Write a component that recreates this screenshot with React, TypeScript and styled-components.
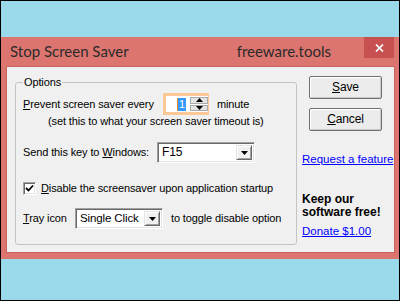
import styled, { createGlobalStyle } from 'styled-components';

const GlobalStyle = createGlobalStyle`
  html, body {
    margin: 0;
    padding: 0;
    background: #000;
  }
  #root {
    width: 400px;
    height: 301px;
  }
`;

const Screen = styled.div`
  width: 400px;
  height: 301px;
  box-sizing: border-box;
  border: 1px solid #000;
  background: #9ad9e9;
  padding-top: 36px;
  font-family: 'Liberation Sans', Arial, sans-serif;
  font-size: 11px;
  line-height: 13px;
  letter-spacing: -0.12px;
  color: #000;
`;

const Window = styled.div`
  height: 222px;
  box-sizing: border-box;
  background: #dc756f;
  padding: 0 5px 7px 6px;
  display: flex;
  flex-direction: column;
`;

const TitleBar = styled.div`
  height: 30px;
  flex-shrink: 0;
  display: flex;
  align-items: flex-start;
  padding-left: 3px;
`;

const TitleText = styled.div`
  font-family: Lato, 'Open Sans', sans-serif;
  font-size: 15px;
  line-height: 20px;
  letter-spacing: 0;
  margin-top: 4px;
  color: #2b2b2b;
  white-space: nowrap;
`;

const Spacer = styled.div`
  flex: 1;
`;

const SiteName = styled(TitleText)`
  margin-right: 33px;
`;

const CloseButton = styled.div`
  width: 30px;
  height: 21px;
  background: #c75050;
  display: flex;
  align-items: center;
  justify-content: center;
`;

const Client = styled.div`
  flex: 1;
  background: #f0f0f0;
  box-shadow: 0 0 0 1px #c9635e;
  display: flex;
  padding: 9px 4px 7px 8px;
`;

const Group = styled.fieldset`
  width: 282px;
  flex-shrink: 0;
  box-sizing: border-box;
  margin: 0;
  padding: 4px 7px 0 7px;
  border: 1px solid #c4c4c4;
  border-radius: 3px;
  min-width: 0;
`;

const Legend = styled.legend`
  padding: 0 1px;
  line-height: 13px;
`;

const Row = styled.div<{ $top: number; $height: number; $indent?: number }>`
  display: flex;
  align-items: center;
  margin-top: ${(p) => p.$top}px;
  height: ${(p) => p.$height}px;
  padding-left: ${(p) => p.$indent ?? 0}px;
  white-space: nowrap;
`;

const Label = styled.span<{ $width?: number }>`
  ${(p) => (p.$width ? `width: ${p.$width}px;` : '')}
  flex-shrink: 0;
`;

const Key = styled.span`
  text-decoration: underline;
`;

const SpinBox = styled.div`
  width: 46px;
  height: 22px;
  box-sizing: border-box;
  border: 3px solid #fdc896;
  border-right-width: 1px;
  background: #fff;
  display: flex;
  margin-right: 8px;
`;

const SpinValue = styled.div`
  flex: 1;
  display: flex;
  align-items: center;
  justify-content: flex-end;
  padding-right: 4px;
`;

const Selected = styled.span`
  background: #3399ff;
  color: #fff;
  border-left: 1px solid #f08a24;
  padding: 0 1px;
  line-height: 13px;
`;

const SpinButtons = styled.div`
  width: 18px;
  display: flex;
  flex-direction: column;
  gap: 1px;
  padding: 1px 0;
`;

const SpinButton = styled.div`
  flex: 1;
  background: #e4e4e4;
  border: 1px solid #a9a9a9;
  display: flex;
  align-items: center;
  justify-content: center;
`;

const Combo = styled.div<{ $width: number; $gap?: number }>`
  width: ${(p) => p.$width}px;
  height: 21px;
  box-sizing: border-box;
  border-top: 1px solid #a0a0a0;
  border-left: 1px solid #a0a0a0;
  border-bottom: 1px solid #fff;
  border-right: 1px solid #fff;
  box-shadow: inset 1px 1px #696969, inset -1px -1px #e3e3e3;
  background: #fff;
  display: flex;
  align-items: stretch;
  padding: 2px;
  margin-right: ${(p) => p.$gap ?? 0}px;
  flex-shrink: 0;
`;

const ComboText = styled.div<{ $size?: number }>`
  flex: 1;
  display: flex;
  align-items: center;
  padding-left: 2px;
  font-size: ${(p) => p.$size ?? 12}px;
`;

const DropButton = styled.div`
  width: 16px;
  box-sizing: border-box;
  background: #f0f0f0;
  border-top: 1px solid #e3e3e3;
  border-left: 1px solid #e3e3e3;
  border-bottom: 1px solid #696969;
  border-right: 1px solid #696969;
  box-shadow: inset 1px 1px #fff, inset -1px -1px #a0a0a0;
  display: flex;
  align-items: center;
  justify-content: center;
`;

const CheckBox = styled.div`
  width: 13px;
  height: 13px;
  box-sizing: border-box;
  border-top: 1px solid #a0a0a0;
  border-left: 1px solid #a0a0a0;
  border-bottom: 1px solid #fff;
  border-right: 1px solid #fff;
  box-shadow: inset 1px 1px #696969, inset -1px -1px #e3e3e3;
  background: #fff;
  display: flex;
  align-items: center;
  justify-content: center;
  margin-right: 5px;
`;

const Side = styled.div`
  flex: 1;
  min-width: 0;
  margin-left: 5px;
  display: flex;
  flex-direction: column;
  align-items: flex-start;
  white-space: nowrap;
`;

const Button = styled.div<{ $top?: number }>`
  width: 73px;
  height: 23px;
  box-sizing: border-box;
  margin-left: 7px;
  margin-top: ${(p) => p.$top ?? 0}px;
  border: 1px solid #707070;
  border-radius: 2px;
  background: #ececec;
  box-shadow: inset 1px 1px #fff, inset -1px -1px #c8c8c8;
  display: flex;
  align-items: center;
  justify-content: center;
  font-size: 12px;
`;

const Link = styled.a<{ $top: number }>`
  color: #0000ff;
  text-decoration: underline;
  margin-top: ${(p) => p.$top}px;
  font-size: 11.5px;
  line-height: 13px;
  letter-spacing: 0;
`;

const Promo = styled.div`
  margin-top: 27px;
  font-weight: bold;
  font-size: 12px;
  line-height: 13px;
  letter-spacing: 0;
`;

const Arrow = ({ up }: { up?: boolean }) => (
  <svg width="7" height="4" viewBox="0 0 7 4">
    <path d={up ? 'M3.5 0 L7 4 L0 4 Z' : 'M0 0 L7 0 L3.5 4 Z'} fill="#000" />
  </svg>
);

function App() {
  return (
    <>
      <GlobalStyle />
      <Screen>
        <Window>
          <TitleBar>
            <TitleText>Stop Screen Saver</TitleText>
            <Spacer />
            <SiteName>freeware.tools</SiteName>
            <CloseButton>
              <svg width="9" height="8" viewBox="0 0 9 8">
                <path d="M1 0.5 L8 7.5 M8 0.5 L1 7.5" stroke="#fff" strokeWidth="1.7" />
              </svg>
            </CloseButton>
          </TitleBar>
          <Client>
            <Group>
              <Legend>Options</Legend>
              <Row $top={0} $height={22}>
                <Label $width={140}>
                  <Key>P</Key>revent screen saver every
                </Label>
                <SpinBox>
                  <SpinValue>
                    <Selected>1</Selected>
                  </SpinValue>
                  <SpinButtons>
                    <SpinButton>
                      <Arrow up />
                    </SpinButton>
                    <SpinButton>
                      <Arrow />
                    </SpinButton>
                  </SpinButtons>
                </SpinBox>
                <Label>minute</Label>
              </Row>
              <Row $top={0} $height={13} $indent={25}>
                (set this to what your screen saver timeout is)
              </Row>
              <Row $top={14} $height={21}>
                <Label $width={134}>
                  Send this key to <Key>W</Key>indows:
                </Label>
                <Combo $width={98}>
                  <ComboText>F15</ComboText>
                  <DropButton>
                    <Arrow />
                  </DropButton>
                </Combo>
              </Row>
              <Row $top={19} $height={13}>
                <CheckBox>
                  <svg width="9" height="9" viewBox="0 0 9 9">
                    <path d="M1 4 L3.5 6.5 L8 1.5" stroke="#000" strokeWidth="1.8" fill="none" />
                  </svg>
                </CheckBox>
                <Label>
                  <Key>D</Key>isable the screensaver upon application startup
                </Label>
              </Row>
              <Row $top={13} $height={21}>
                <Label $width={52}>
                  <Key>T</Key>ray icon
                </Label>
                <Combo $width={88} $gap={8}>
                  <ComboText $size={11.5}>Single Click</ComboText>
                  <DropButton>
                    <Arrow />
                  </DropButton>
                </Combo>
                <Label>to toggle disable option</Label>
              </Row>
            </Group>
            <Side>
              <Button>
                <span>
                  <Key>S</Key>ave
                </span>
              </Button>
              <Button $top={9}>
                <span>
                  <Key>C</Key>ancel
                </span>
              </Button>
              <Link $top={22}>Request a feature</Link>
              <Promo>
                Keep our
                <br />
                software free!
              </Promo>
              <Link $top={6}>Donate $1.00</Link>
            </Side>
          </Client>
        </Window>
      </Screen>
    </>
  );
}

export default App;
